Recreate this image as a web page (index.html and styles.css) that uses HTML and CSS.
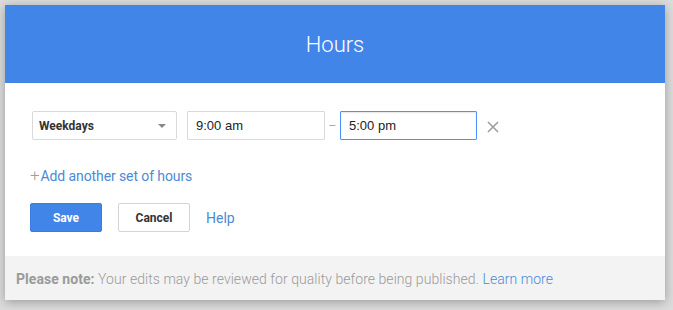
FILE: index.html
```html
<!DOCTYPE html>
<html lang="en">
<head>
  <meta charset="UTF-8" />
  <title>Hours</title>
  <link rel="stylesheet" href="styles.css">
</head>
<body>
  <div class="dialog">
    <div class="dialog-header">Hours</div>

    <div class="dialog-body">
      <div class="hours-row">
        <div class="day-select">
          <span>Weekdays</span>
          <span class="caret"></span>
        </div>
        <input type="text" class="time-input" value="9:00 am" />
        <span class="dash">–</span>
        <input type="text" class="time-input focused" value="5:00 pm" />
        <span class="remove">
          <svg width="12" height="12" viewBox="0 0 12 12">
            <path d="M1 1 L11 11 M11 1 L1 11" stroke="#9e9e9e" stroke-width="1.6" />
          </svg>
        </span>
      </div>

      <a class="add-link" href="#"><span class="plus">+</span>Add another set of hours</a>

      <div class="buttons">
        <button class="btn btn-save">Save</button>
        <button class="btn btn-cancel">Cancel</button>
        <a class="help" href="#">Help</a>
      </div>
    </div>

    <div class="dialog-footer">
      <strong>Please note:</strong> Your edits may be reviewed for quality before being published. <a href="#">Learn more</a>
    </div>
  </div>
</body>
</html>
```
FILE: styles.css
```css
body {
  margin: 0;
  padding: 5px 8px 11px 5px;
  background: #dcdcdc;
  font-family: Roboto, "Liberation Sans", sans-serif;
}

.dialog {
  width: 660px;
  background: #fff;
  box-shadow: 0 2px 10px rgba(0, 0, 0, 0.3);
}

.dialog-header {
  height: 78px;
  background: #4285e9;
  color: #fff;
  font-size: 22px;
  font-weight: 300;
  text-align: center;
  line-height: 80px;
}

.dialog-body {
  padding: 28px 25px 24px 25px;
}

.hours-row {
  display: flex;
  align-items: center;
  margin-left: 2px;
}

.day-select {
  width: 145px;
  height: 29px;
  box-sizing: border-box;
  border: 1px solid #d9d9d9;
  border-radius: 2px;
  display: flex;
  align-items: center;
  justify-content: space-between;
  padding: 0 10px 0 6px;
  font-size: 12px;
  font-weight: bold;
  color: #333;
}

.caret {
  width: 0;
  height: 0;
  border-left: 4px solid transparent;
  border-right: 4px solid transparent;
  border-top: 4px solid #888;
}

.time-input {
  width: 138px;
  height: 29px;
  box-sizing: border-box;
  margin-left: 10px;
  border: 1px solid #d9d9d9;
  border-radius: 1px;
  padding: 0 8px;
  font-family: "Liberation Sans", Arial, sans-serif;
  font-size: 13px;
  color: #222;
  outline: none;
}

.time-input.focused {
  margin-left: 0;
  width: 137px;
  border-color: #4d90fe;
  box-shadow: inset 0 1px 2px rgba(0, 0, 0, 0.1);
}

.dash {
  width: 15px;
  text-align: center;
  color: #aaa;
  font-size: 12px;
}

.remove {
  margin-left: 10px;
  display: flex;
  align-items: center;
  padding-top: 2px;
}

.add-link {
  display: inline-block;
  margin-top: 25px;
  color: #4a8ad8;
  font-size: 14px;
  letter-spacing: -0.1px;
  text-decoration: none;
}

.plus {
  color: #a0a0a0;
  font-size: 17px;
  font-weight: 300;
  margin-right: 1px;
}

.buttons {
  display: flex;
  align-items: center;
  margin-top: 18px;
}

.btn {
  height: 29px;
  padding: 0;
  font-family: Roboto, "Liberation Sans", sans-serif;
  font-size: 12px;
  font-weight: bold;
  border-radius: 2px;
  cursor: pointer;
}

.btn-save {
  width: 72px;
  background: #4285e9;
  color: #fff;
  border: 1px solid #3b7ce0;
}

.btn-cancel {
  width: 72px;
  margin-left: 16px;
  background: #fff;
  color: #333;
  border: 1px solid #d4d4d4;
}

.help {
  margin-left: 16px;
  color: #4a8ad8;
  font-size: 14px;
  text-decoration: none;
}

.dialog-footer {
  height: 44px;
  background: #f3f3f3;
  padding: 0 11px;
  line-height: 46px;
  font-size: 14px;
  font-weight: 300;
  letter-spacing: 0.05px;
  color: #9a9a9a;
}

.dialog-footer strong {
  font-weight: bold;
  color: #9a9a9a;
}

.dialog-footer a {
  color: #4a8ad8;
  text-decoration: none;
}
```
